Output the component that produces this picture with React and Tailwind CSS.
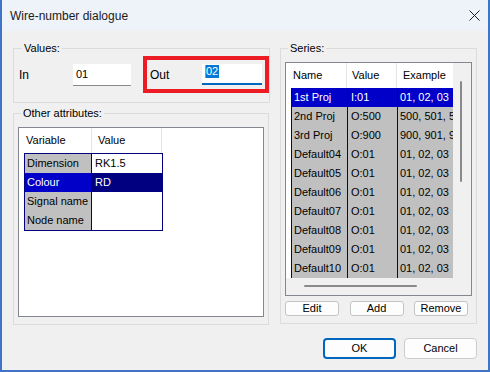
const series = [
  ["1st Proj", "I:01", "01, 02, 03"],
  ["2nd Proj", "O:500", "500, 501, 502"],
  ["3rd Proj", "O:900", "900, 901, 902"],
  ["Default04", "O:01", "01, 02, 03"],
  ["Default05", "O:01", "01, 02, 03"],
  ["Default06", "O:01", "01, 02, 03"],
  ["Default07", "O:01", "01, 02, 03"],
  ["Default08", "O:01", "01, 02, 03"],
  ["Default09", "O:01", "01, 02, 03"],
  ["Default10", "O:01", "01, 02, 03"],
];

const attributes = [
  ["Dimension", "RK1.5"],
  ["Colour", "RD"],
  ["Signal name", ""],
  ["Node name", ""],
];

function Group({ label, className, children }) {
  return (
    <fieldset className={"border border-[#dcdcdc] px-[4px] " + className}>
      <legend className="ml-[3px] px-[2px] text-[11px] leading-[16px]">{label}</legend>
      {children}
    </fieldset>
  );
}

function SmallButton({ children }) {
  return (
    <button className="w-[54px] h-[15px] rounded-[3px] border border-[#c4c4c4] bg-[#fdfdfd] text-[11px] leading-[13px] flex items-center justify-center">
      {children}
    </button>
  );
}

export default function App() {
  return (
    <div className="w-[490px] h-[372px] bg-[#f0f0f0] border-x-2 border-b-2 border-[#3f74c6] flex flex-col text-black font-['Liberation_Sans',Arial,sans-serif] overflow-hidden">
      {/* Title bar */}
      <div className="h-[31px] shrink-0 bg-[#eef3fa] flex items-center justify-between pl-[8px] pr-[8px]">
        <span className="text-[12px] text-[#1a1a1a]">Wire-number dialogue</span>
        <svg width="11" height="11" viewBox="0 0 11 11">
          <path d="M0.5 0.5L10.5 10.5M10.5 0.5L0.5 10.5" stroke="#1a1a1a" strokeWidth="1" />
        </svg>
      </div>

      <div className="flex flex-col pt-[9px] pl-[11px] pr-[11px]">
        <div className="flex gap-[11px] items-start">
          {/* Left column */}
          <div className="w-[256px] flex flex-col">
            <Group label="Values:" className="h-[63px] !pl-[5px] !pr-0">
              <div className="flex items-center h-[37px]">
                <span className="w-[54px] text-[12px]">In</span>
                <div className="w-[58px] h-[22px] bg-white border-b border-[#8a8a8a] text-[11px] pl-[3px] pt-[2px]">
                  01
                </div>
                <div className="ml-[12px] w-[126px] h-[37px] border-4 border-[#ed1c24] flex items-center">
                  <span className="w-[55px] pl-[3px] text-[12px]">Out</span>
                  <div className="w-[60px] h-[21px] bg-white border-b-2 border-[#0067c0] pl-[3px] pt-[1px] flex items-start">
                    <span className="w-px h-[13px] bg-[#e08a1e]" />
                    <span className="bg-[#0078d7] text-white text-[11px] leading-[13px] pr-px">02</span>
                  </div>
                </div>
              </div>
            </Group>

            <Group label="Other attributes:" className="mt-[2px] h-[220px]">
              <div className="mt-[6px] h-[190px] bg-white border border-[#828790] pl-[5px] text-[11px]">
                <div className="flex h-[25px] items-center">
                  <div className="w-[68px] pl-[2px] h-full flex items-center border-r border-[#e5e5e5]">Variable</div>
                  <div className="w-[70px] pl-[6px] h-full flex items-center border-r border-[#e5e5e5]">Value</div>
                </div>
                <div className="w-[139px] border border-[#000080]">
                  {attributes.map(([name, value], i) => (
                    <div key={name} className="flex h-[19px]">
                      <div
                        className={
                          "w-[67px] pl-[2px] flex items-center border-r border-[#000080] " +
                          (i === 1 ? "bg-[#0000c8] text-white" : "bg-[#c0c0c0]")
                        }
                      >
                        {name}
                      </div>
                      <div
                        className={
                          "flex-1 pl-[3px] flex items-center " +
                          (i === 1 ? "bg-[#000080] text-white" : "bg-white")
                        }
                      >
                        {value}
                      </div>
                    </div>
                  ))}
                </div>
              </div>
            </Group>
          </div>

          {/* Right column */}
          <Group label="Series:" className="w-[198px] h-[284px]">
            <div className="mt-[6px] h-[234px] w-[187px] bg-white border border-[#828790] flex flex-col text-[11px]">
              <div className="flex h-[215px]">
                <div className="w-[167px] pl-[5px] overflow-hidden">
                  <div className="flex h-[25px]">
                    <div className="w-[56px] pl-[2px] flex items-center border-r border-[#e5e5e5]">Name</div>
                    <div className="w-[50px] pl-[5px] flex items-center border-r border-[#e5e5e5]">Value</div>
                    <div className="flex-1 pl-[6px] flex items-center whitespace-nowrap">Example</div>
                  </div>
                  <div className="border-l border-[#000080]">
                    {series.map(([name, value, example], i) => (
                      <div
                        key={name}
                        className={
                          "flex h-[19px] whitespace-nowrap " +
                          (i === 0 ? "bg-[#0000c8] text-white" : "bg-[#c0c0c0]")
                        }
                      >
                        <div className="w-[56px] pl-[2px] flex items-center border-r border-[#000080]">{name}</div>
                        <div className="w-[50px] pl-[3px] flex items-center border-r border-[#000080]">{value}</div>
                        <div className="flex-1 pl-[2px] flex items-center overflow-hidden">{example}</div>
                      </div>
                    ))}
                  </div>
                </div>
                <div className="w-[18px] bg-[#f0f0f0] pl-[7px] pt-[18px]">
                  <div className="w-[2px] h-[101px] rounded-full bg-[#8a8a8a]" />
                </div>
              </div>
              <div className="flex-1 bg-[#f0f0f0] pl-[18px] pt-[7px]">
                <div className="w-[113px] h-[2px] rounded-full bg-[#8a8a8a]" />
              </div>
            </div>
            <div className="mt-[5px] w-[183px] flex justify-between">
              <SmallButton>Edit</SmallButton>
              <SmallButton>Add</SmallButton>
              <SmallButton>Remove</SmallButton>
            </div>
          </Group>
        </div>

        <div className="flex justify-end gap-[8px] mt-[13px]">
          <button className="w-[73px] h-[21px] rounded-[4px] border-2 border-[#0067c0] bg-[#fdfdfd] text-[11px] flex items-center justify-center">
            OK
          </button>
          <button className="w-[73px] h-[21px] rounded-[4px] border border-[#cccccc] bg-[#fdfdfd] text-[11px] flex items-center justify-center">
            Cancel
          </button>
        </div>
      </div>
    </div>
  );
}
